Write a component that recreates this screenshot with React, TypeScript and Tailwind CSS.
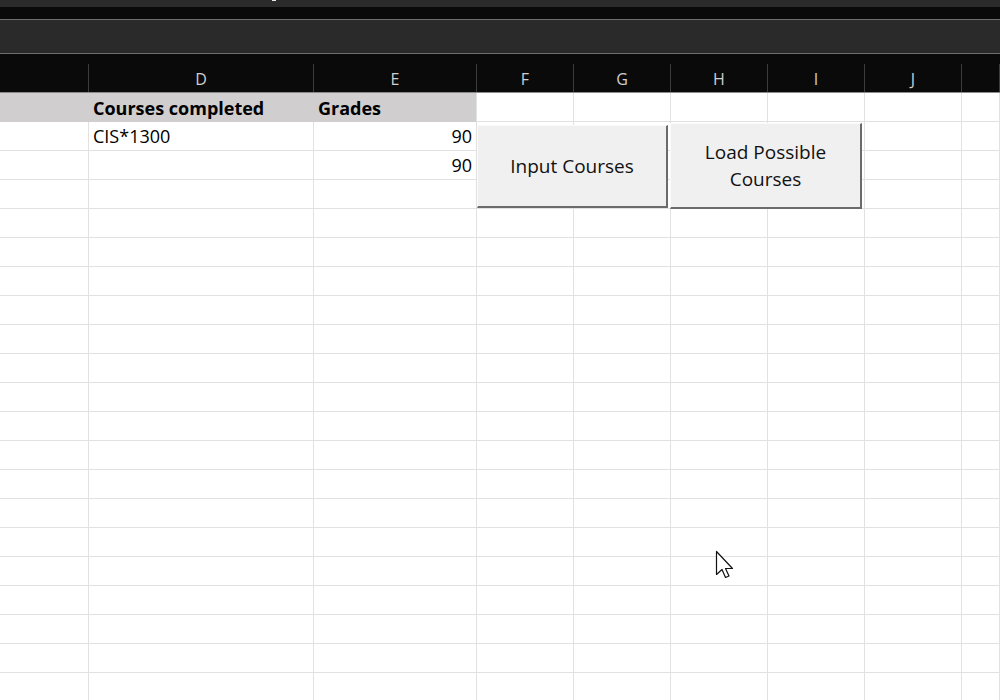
import React from 'react';

const cols = [
  { key: 'C', w: 'w-[89px]' },
  { key: 'D', w: 'w-[225px]' },
  { key: 'E', w: 'w-[163px]' },
  { key: 'F', w: 'w-[97px]' },
  { key: 'G', w: 'w-[97px]' },
  { key: 'H', w: 'w-[97px]' },
  { key: 'I', w: 'w-[97px]' },
  { key: 'J', w: 'w-[97px]' },
  { key: 'K', w: 'flex-1' },
];

const rows: Record<number, Record<string, string>> = {
  1: { D: 'Courses completed', E: 'Grades' },
  2: { D: 'CIS*1300', E: '90' },
  3: { E: '90' },
};

const Cursor = () => (
  <svg width="20" height="30" viewBox="0 0 20 30" className="absolute left-[715px] top-[550px]">
    <path
      d="M1.5 1.5 L1.5 24.5 L7 19.5 L10.5 27.5 L14 26 L10.5 18.5 L17.5 18.5 Z"
      fill="#ffffff"
      stroke="#111111"
      strokeWidth="1.2"
      strokeLinejoin="round"
    />
  </svg>
);

// form-control buttons floating over the sheet
const SheetButton: React.FC<{ className: string; children: React.ReactNode }> = ({ className, children }) => (
  <div
    className={`absolute flex items-center justify-center text-center bg-[#f0f0f0] border-t border-l border-[#fbfbfb] border-r-2 border-b-2 border-r-[#6b6b6b] border-b-[#6b6b6b] text-[19px] leading-[27px] text-[#111] ${className}`}
  >
    {children}
  </div>
);

export default function App() {
  return (
    <div className="relative w-[1000px] h-[700px] overflow-hidden bg-white font-['Open_Sans',sans-serif]">
      {/* window chrome */}
      <div className="flex h-[7px] bg-[#2b2b2b] pl-[272px]">
        <div className="w-[4px] h-[1px] bg-[#e8e8e8]" />
      </div>
      <div className="h-[12px] bg-[#0a0a0a]" />
      <div className="h-[1px] bg-[#6e6e6e]" />
      <div className="h-[33px] bg-[#2a2a2a]" />
      <div className="h-[1px] bg-[#6e6e6e]" />
      <div className="h-[10px] bg-[#0a0a0a]" />

      {/* column headers */}
      <div className="flex h-[29px] bg-[#0a0a0a] border-b border-[#8a8a8a]">
        {cols.map((c) => (
          <div
            key={c.key}
            className={`${c.w} shrink-0 h-full border-r border-[#3c3c3c] flex items-center justify-center pt-[2px] text-[16px] text-[#cfcfcf]`}
          >
            {c.key === 'C' || c.key === 'K' ? '' : c.key}
          </div>
        ))}
      </div>

      {/* grid */}
      {Array.from({ length: 22 }, (_, i) => i + 1).map((r) => (
        <div key={r} className="flex h-[29px]">
          {cols.map((c) => {
            const v = rows[r]?.[c.key];
            const head = r === 1 && ['C', 'D', 'E'].includes(c.key);
            const right = r > 1 && c.key === 'E';
            return (
              <div
                key={c.key}
                className={`${c.w} shrink-0 h-full flex items-end pb-[1px] px-[4px] text-[18px] leading-[25px] text-black ${
                  head ? 'bg-[#d0cece] font-bold' : 'border-b border-[#e1e1e1]'
                } ${head && c.key !== 'E' ? '' : 'border-r border-[#e1e1e1]'} ${right ? 'justify-end' : ''}`}
              >
                {v}
              </div>
            );
          })}
        </div>
      ))}

      <SheetButton className="left-[477px] top-[125px] w-[191px] h-[83px]">Input Courses</SheetButton>
      <SheetButton className="left-[670px] top-[123px] w-[192px] h-[86px]">
        Load Possible
        <br />
        Courses
      </SheetButton>

      <Cursor />
    </div>
  );
}
